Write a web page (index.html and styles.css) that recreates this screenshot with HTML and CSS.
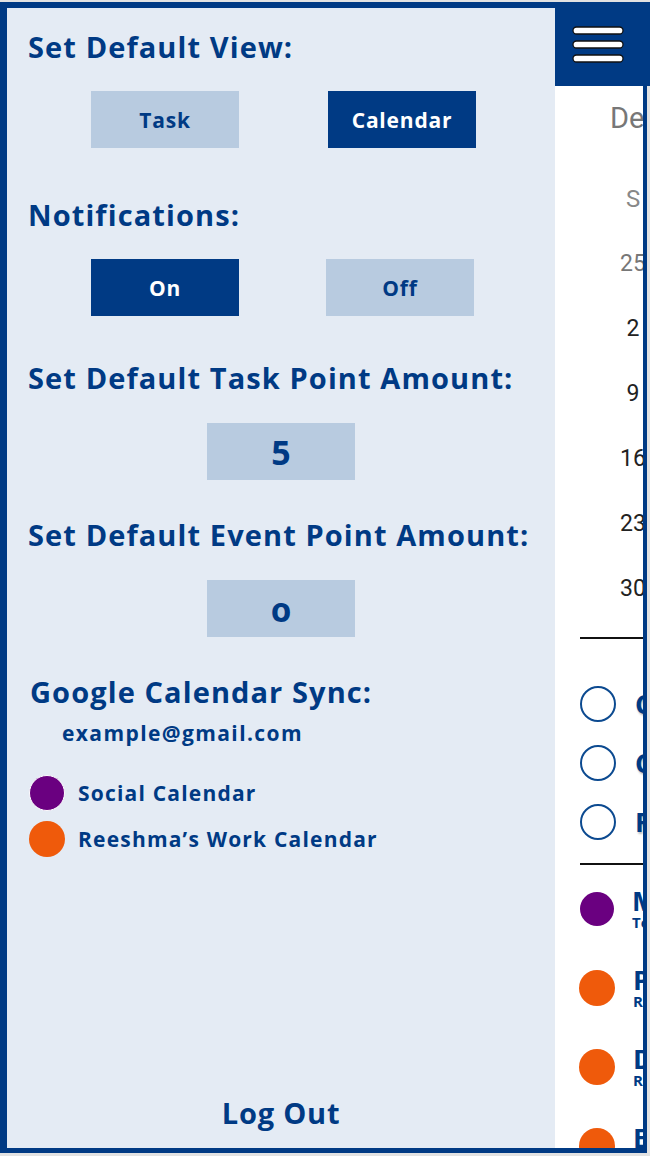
FILE: index.html
```html
<!DOCTYPE html>
<html>
<head>
    <title>Settings</title>
    <link rel="stylesheet" href="styles.css">
</head>
<body>

<div class="frame">
    <div class="drawer">
        <h2 class="tit">Set Default View:</h2>
        <div class="btn-row">
            <span class="btn">Task</span>
            <span class="btn on">Calendar</span>
        </div>

        <h2 class="tit t-notify">Notifications:</h2>
        <div class="btn-row gap-off">
            <span class="btn on">On</span>
            <span class="btn">Off</span>
        </div>

        <h2 class="tit t-task">Set Default Task Point Amount:</h2>
        <div class="num-row"><span class="num">5</span></div>

        <h2 class="tit t-event">Set Default Event Point Amount:</h2>
        <div class="num-row"><span class="num zero">0</span></div>

        <h2 class="tit t-sync">Google Calendar Sync:</h2>
        <div class="email">example@gmail.com</div>

        <div class="cal-list">
            <div class="cal-item"><span class="dot purple"></span>Social Calendar</div>
            <div class="cal-item"><span class="dot orange"></span>Reeshma’s Work Calendar</div>
        </div>

        <div class="logout">Log Out</div>
    </div>

    <div class="cal">
        <div class="cal-head">
            <svg width="56" height="40" viewBox="0 0 56 40">
                <rect x="3" y="2" width="50" height="7" rx="3.5" fill="#fff" stroke="#111" stroke-width="1.3"/>
                <rect x="3" y="16" width="50" height="7" rx="3.5" fill="#fff" stroke="#111" stroke-width="1.3"/>
                <rect x="3" y="30" width="50" height="7" rx="3.5" fill="#fff" stroke="#111" stroke-width="1.3"/>
            </svg>
        </div>
        <div class="cal-body">
            <div class="month">December 2018</div>
            <div class="week wd"><span>S</span><span>M</span><span>T</span></div>
            <div class="week prev"><span>25</span><span>26</span><span>27</span></div>
            <div class="week"><span>2</span><span>3</span><span>4</span></div>
            <div class="week"><span>9</span><span>10</span><span>11</span></div>
            <div class="week"><span>16</span><span>17</span><span>18</span></div>
            <div class="week"><span>23</span><span>24</span><span>25</span></div>
            <div class="week"><span>30</span><span>31</span><span>1</span></div>

            <div class="rule"></div>
            <div class="todo"><span class="ring"></span>Call dentist</div>
            <div class="todo"><span class="ring"></span>Clean room</div>
            <div class="todo"><span class="ring"></span>Finish essay</div>
            <div class="rule"></div>

            <div class="ev"><span class="dot purple sm"></span><div><b>Movie night</b><small>Tonight</small></div></div>
            <div class="ev"><span class="dot orange"></span><div><b>Project meeting</b><small>Reeshma’s Work</small></div></div>
            <div class="ev"><span class="dot orange"></span><div><b>Deadline</b><small>Reeshma’s Work</small></div></div>
            <div class="ev"><span class="dot orange"></span><div><b>Email boss</b><small>Reeshma’s Work</small></div></div>
        </div>
    </div>
</div>

</body>
</html>
```

FILE: styles.css
```css
body{ margin: 0;background: #e2e2e2;font-family: "Open Sans", "Lato", sans-serif;color: #003a84;}
.frame{
    display: flex;
    width: 647px;
    height: 1151px;
    margin-top: 2px;
    box-sizing: border-box;
    border: solid #003a84;
    border-width: 6px 4px 5px 7px;
}

/* left drawer */
.drawer{
    width: 548px;
    display: flex;
    flex-direction: column;
    background: #e4ebf4;
    padding: 0 0 18px 21px;
    box-sizing: border-box;
}
.tit{ margin: 22px 0 0 0;font-size: 29px;line-height: 34px;font-weight: 700;letter-spacing: 1.1px;white-space: nowrap;}
.t-notify{ margin-top: 50px;}
.t-task{ margin-top: 45px;}
.t-event{ margin-top: 38px;}
.t-sync{ margin-top: 38px;padding-left: 2px;}
.btn-row{ display: flex;gap: 89px;margin-top: 27px;padding-left: 63px;}
.gap-off{ gap: 87px;}
.btn{
    width: 148px;
    height: 57px;
    display: flex;
    align-items: center;
    justify-content: center;
    background: #b8cbe0;
    font-size: 21px;
    font-weight: 700;
    letter-spacing: .8px;
}
.btn.on{ background: #003a84;color: #fff;}
.num-row{ margin-top: 28px;padding-left: 179px;}
.num{
    width: 148px;
    height: 57px;
    display: flex;
    align-items: center;
    justify-content: center;
    background: #b8cbe0;
    font-size: 34px;
    font-weight: 700;
}
.zero{ font-variant-numeric: oldstyle-nums;}
.email{ margin: 12px 0 0 34px;font-size: 21px;line-height: 24px;font-weight: 700;letter-spacing: 1.4px;}
.cal-list{ margin-top: 30px;display: flex;flex-direction: column;gap: 10px;padding-left: 1px;}
.cal-item{ display: flex;align-items: center;gap: 13px;font-size: 21px;font-weight: 700;letter-spacing: 1.2px;}
.dot{ width: 36px;height: 36px;border-radius: 50%;box-sizing: border-box;flex: none;}
.purple{ background: #6a0080;border: solid 1.5px #fff;}
.orange{ background: #ef5a0b;}
.logout{ margin-top: auto;text-align: center;font-size: 29px;line-height: 34px;font-weight: 700;letter-spacing: .8px;padding-right: 21px;}

/* calendar strip */
.cal{ flex: 1;display: flex;flex-direction: column;background: #fff;min-width: 0;}
.cal-head{
    height: 84px;
    margin: -6px -7px 0 0;
    background: #003a84;
    display: flex;
    align-items: center;
    padding-left: 15px;
}
.cal-head svg{ margin-top: 2px;}
.cal-body{ flex: 1;overflow: hidden;font-family: "Roboto", sans-serif;}
.month{ margin: 15px 0 0 55px;font-size: 29px;line-height: 34px;color: #777;white-space: nowrap;}
.week{ display: flex;padding-left: 58px;height: 65px;align-items: center;font-size: 23px;color: #222;}
.week span{ width: 40px;flex: none;text-align: center;}
.wd{ margin-top: 31px;color: #888;font-size: 24px;}
.prev{ color: #777;}
.rule{ height: 2px;background: #111;margin-left: 25px;width: 120px;}
.week + .rule{ margin-top: 16px;}
.todo{
    display: flex;
    align-items: center;
    gap: 19px;
    height: 59px;
    padding-left: 25px;
    font-family: "Open Sans", sans-serif;
    font-size: 27px;
    font-weight: 700;
    white-space: nowrap;
    text-shadow: 1px 2px 2px rgba(0,0,0,.25);
}
.rule + .todo{ margin-top: 35px;}
.todo + .rule{ margin-top: 12px;}
.ring{ width: 36px;height: 36px;border: solid 2px #0c4a90;border-radius: 50%;box-sizing: border-box;flex: none;}
.ev{
    display: flex;
    align-items: center;
    gap: 18px;
    height: 79px;
    padding-left: 24px;
    font-family: "Open Sans", sans-serif;
    white-space: nowrap;
}
.rule + .ev{ margin-top: 4px;}
.ev b{ display: block;font-size: 27px;line-height: 26px;}
.ev small{ display: block;font-size: 15px;font-weight: 700;line-height: 16px;}
.dot.sm{ width: 34px;height: 34px;margin-left: 1px;border: none;}
```
